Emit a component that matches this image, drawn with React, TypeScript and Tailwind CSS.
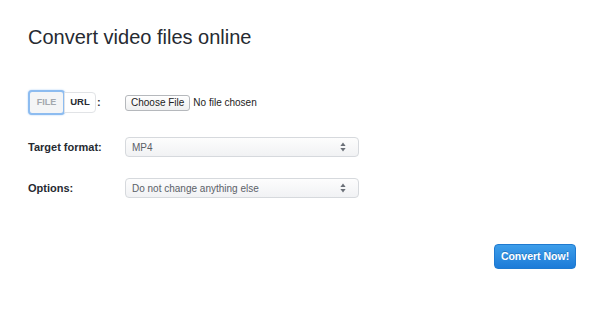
import { useState } from 'react';

function SelectBox({ value }: { value: string }) {
  return (
    <div className="flex items-center justify-between w-[234px] h-[20px] rounded-[4px] border border-[#d6d9dd] bg-gradient-to-b from-[#fdfdfd] to-[#f1f2f4] pl-[6px] pr-[12px]">
      <span className="text-[10px] text-[#5b6168]">{value}</span>
      <svg width="6" height="10" viewBox="0 0 6 10">
        <path d="M3 0.5 L5.6 4 L0.4 4 Z" fill="#6b7078" />
        <path d="M3 9.5 L5.6 6 L0.4 6 Z" fill="#6b7078" />
      </svg>
    </div>
  );
}

export default function App() {
  const [mode, setMode] = useState<'file' | 'url'>('file');

  return (
    <div className="w-[600px] h-[312px] bg-white px-[28px] font-['Liberation_Sans',Arial,sans-serif] text-[#2a2e35]">
      <h1 className="pt-[25px] text-[20px] leading-[24px] font-normal text-[#262a31]">
        Convert video files online
      </h1>

      <div className="mt-[41px] flex items-center h-[25px]">
        <div className="w-[97px] flex items-center">
          <div className="flex items-center">
            <button
              onClick={() => setMode('file')}
              className={`h-[25px] w-[37px] rounded-[4px] border-2 text-[9px] font-bold ${
                mode === 'file'
                  ? 'border-[#8dbcf0] bg-[#f4f5f6] text-[#a3a8ae] shadow-[0_0_2px_#a9cdf5]'
                  : 'border-[#e1e3e6] bg-white text-[#a3a8ae]'
              }`}
            >
              FILE
            </button>
            <button
              onClick={() => setMode('url')}
              className="h-[21px] w-[32px] -ml-[1px] rounded-r-[4px] border border-[#e1e3e6] bg-white text-[9.5px] font-bold text-[#262a31]"
            >
              URL
            </button>
          </div>
          <span className="ml-[1px] text-[11px] font-bold">:</span>
        </div>
        <div className="flex items-center">
          <button className="h-[16px] px-[5px] rounded-[3px] border border-[#b5b8bc] bg-gradient-to-b from-white to-[#eeeff0] text-[10px] leading-[14px] text-[#222]">
            Choose File
          </button>
          <span className="ml-[3px] text-[10px] text-[#222]">No file chosen</span>
        </div>
      </div>

      <div className="mt-[22px] flex items-center">
        <label className="w-[97px] text-[11px] font-bold text-[#262a31]">Target format:</label>
        <SelectBox value="MP4" />
      </div>

      <div className="mt-[21px] flex items-center">
        <label className="w-[97px] text-[11px] font-bold text-[#262a31]">Options:</label>
        <SelectBox value="Do not change anything else" />
      </div>

      <div className="mt-[46px] flex justify-end">
        <button className="mr-[-4px] h-[25px] w-[82px] rounded-[4px] border border-[#1f7ad0] bg-gradient-to-b from-[#3d9eea] to-[#1c7bd8] text-[10.5px] font-bold text-white [text-shadow:0_-1px_0_rgba(0,0,0,0.2)]">
          Convert Now!
        </button>
      </div>
    </div>
  );
}
